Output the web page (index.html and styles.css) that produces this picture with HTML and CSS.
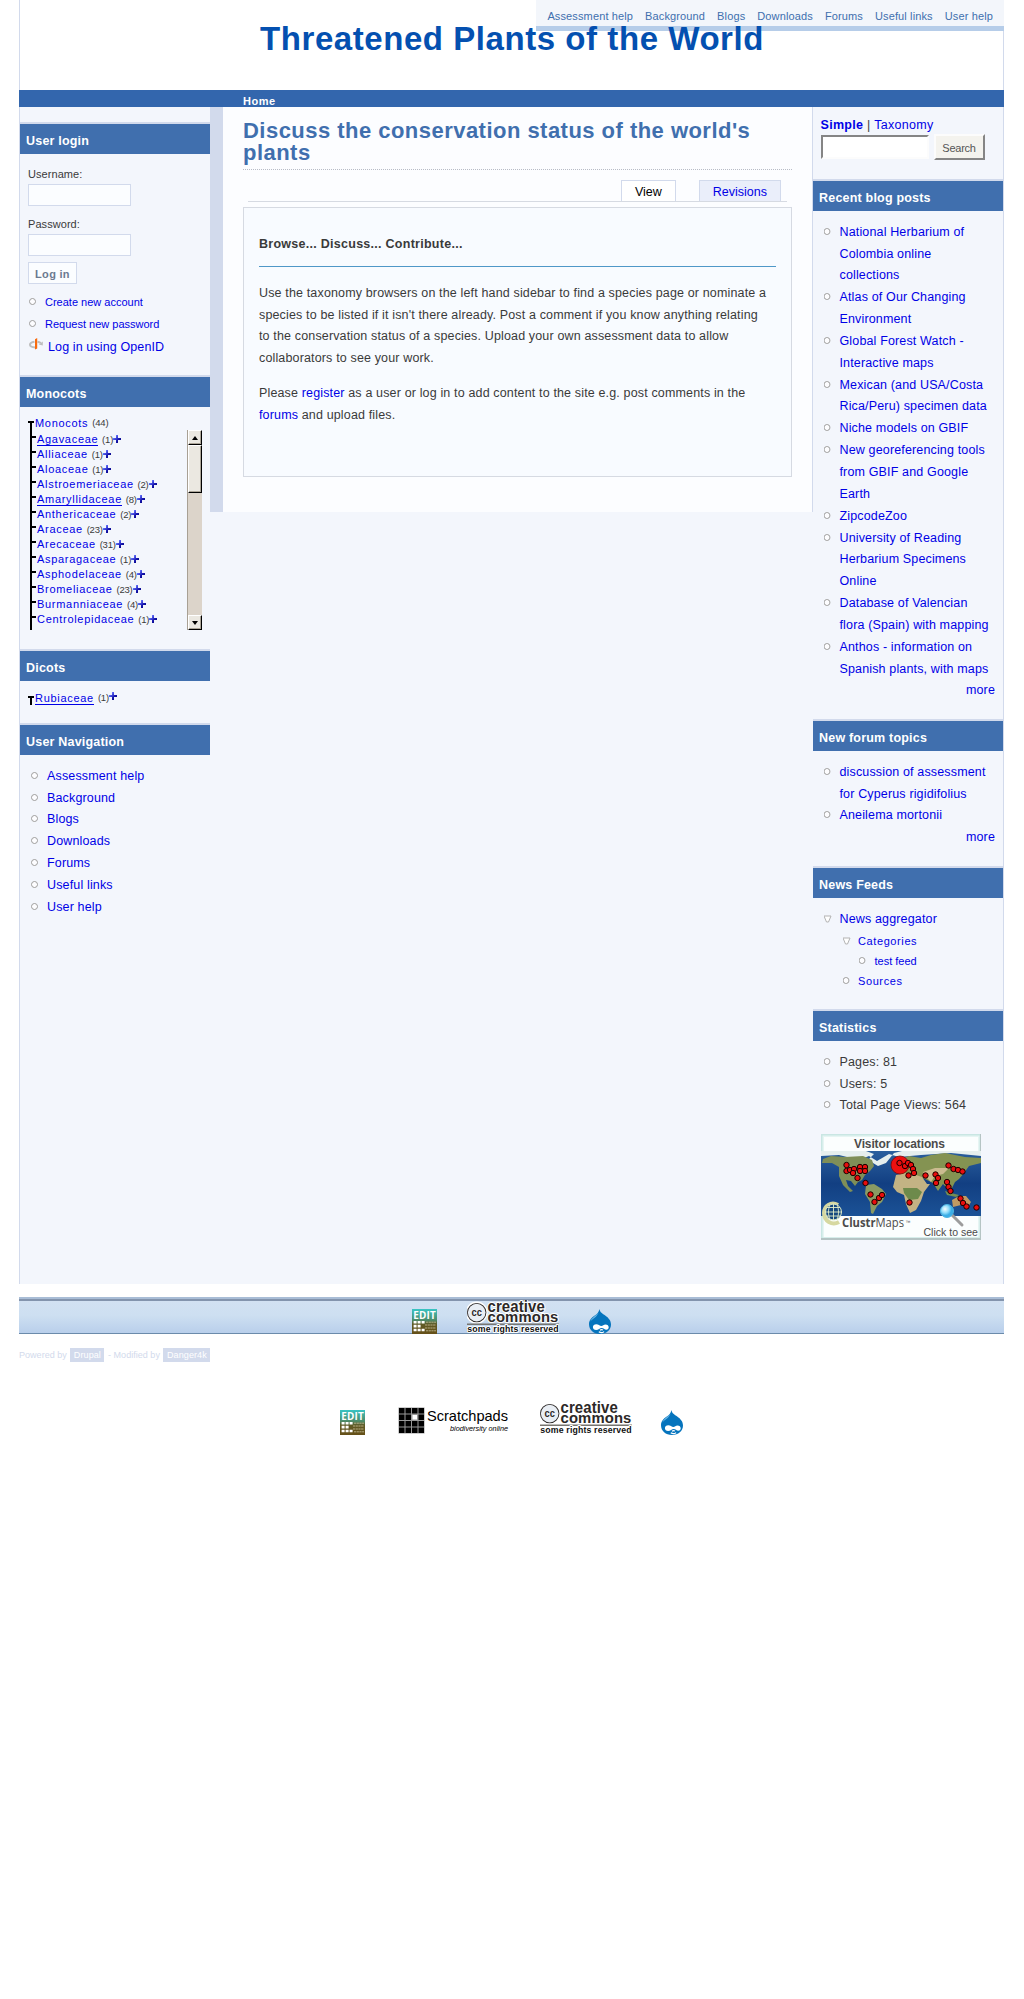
FILE: index.html
```
<!DOCTYPE html>
<html lang="en">
<head>
<meta charset="utf-8">
<title>Threatened Plants of the World</title>
<link rel="stylesheet" href="styles.css">
</head>
<body>
<svg class="defs" width="0" height="0" aria-hidden="true">
  <defs>
    <linearGradient id="editFill" x1="0" y1="0" x2="0" y2="1">
      <stop offset="0" stop-color="#38c4c4"/><stop offset=".45" stop-color="#4d8a68"/><stop offset=".6" stop-color="#5f5a26"/><stop offset="1" stop-color="#665018"/>
    </linearGradient>
    <symbol id="edit" viewBox="0 0 25 25">
      <rect width="25" height="25" fill="url(#editFill)"/>
      <text x="1.3" y="9.8" font-family="Open Sans, sans-serif" font-weight="700" font-size="10.5" textLength="22.5" lengthAdjust="spacingAndGlyphs" fill="#fff">EDIT</text>
      <path fill="#fff" d="M1.6 12h3v2.6h-3zM5.6 12h3v2.6h-3zM9.6 12h3v2.6h-3zM1.6 15.8h3v2.6h-3zM5.6 15.8h3v2.6h-3zM1.6 19.7h3v2.6h-3zM5.6 19.7h3v2.6h-3zM9.6 19.7h3v2.6h-3z"/>
      <path stroke="#b5ac84" stroke-width="1" stroke-dasharray="2.2 .5" d="M14 13.2h10M13 16h11M13 19h11M14 21.8h10"/>
    </symbol>
    <symbol id="cc" viewBox="0 0 92 34">
      <g font-family="Liberation Sans, sans-serif" font-weight="700" fill="#2c2827" stroke="#fff" stroke-width="2" paint-order="stroke" stroke-linejoin="round">
        <circle cx="9.7" cy="12.6" r="9" fill="#e8eef5" stroke="#fff" stroke-width="4"/>
        <circle cx="9.7" cy="12.6" r="8.8" fill="#e9eef4" stroke="#2c2827" stroke-width="1.8"/>
        <text x="4.4" y="16" font-size="10" textLength="10.6" lengthAdjust="spacingAndGlyphs" stroke="none">cc</text>
        <text x="20.5" y="12" font-size="16.5" textLength="57.5" lengthAdjust="spacingAndGlyphs">creative</text>
        <text x="20.5" y="21.8" font-size="15.5" textLength="71" lengthAdjust="spacingAndGlyphs">commons</text>
        <path d="M0 24.2h92" stroke="#77756f" stroke-width="1.6"/>
        <text x="0.3" y="31.6" font-size="8.6" textLength="91.5" lengthAdjust="spacingAndGlyphs" fill="#111">some rights reserved</text>
      </g>
    </symbol>
    <symbol id="drop" viewBox="0 0 22 25">
      <path fill="#0574bd" d="M10.4 0C11 3.6 13.6 4.6 16.2 6.4 19.600 8.800 22 11.500 22 15.500 22 21 17.300 25 11 25S0 21 0 15.300C0 11.500 2.600 8.600 5.400 6.800 8.200 5 9.800 3.400 10.400 0z"/>
      <path fill="#6cb8e6" d="M10.400 1.500C9.800 4.400 7.600 5.700 5.500 7.200 3.500 8.600 2 10.500 1.300 12.500 3.500 9.500 8.600 8.200 10.400 1.500z"/>
      <path fill="#fff" d="M7.300 15.200c2 0 3.400 1.700 5 1.700 1.500 0 2.400-1.500 4.200-1.500 2 0 3.200 1.200 3.200 2.900 0 1.500-.9 2.500-2.400 2.500-1.800 0-2.800-1.700-4.600-1.700-1.900 0-3.200 2-5.600 2-1.900 0-3.200-1.200-3.200-3 0-1.700 1.400-2.900 3.400-2.900z"/>
      <path fill="none" stroke="#fff" stroke-width="1.200" d="M9.800 22.800c1.500 1 4 1 5.300-.2M11 21.200c.8-.7 2.200-.7 2.900 0"/>
    </symbol>
    <linearGradient id="plusFill" x1="0" y1="0" x2="1" y2="1">
      <stop offset=".2" stop-color="#6c79ff"/><stop offset=".6" stop-color="#1515b0"/><stop offset="1" stop-color="#000060"/>
    </linearGradient>
    <symbol id="plus" viewBox="0 0 8 8"><path fill="url(#plusFill)" d="M3 0h2v3h3v2H5v3H3V5H0V3h3z"/></symbol>
  </defs>
</svg>

<div class="page">
  <header class="header">
    <nav class="topmenu">
      <a>Assessment help</a><a>Background</a><a>Blogs</a><a>Downloads</a><a>Forums</a><a>Useful links</a><a>User help</a>
    </nav>
    <h1 class="sitename">Threatened Plants of the World</h1>
  </header>
  <div class="crumbs"><b>Home</b></div>

  <div class="columns">
    <aside class="side left">
      <section class="block login">
        <h2>User login</h2>
        <form class="login-form">
          <label>Username:</label><div class="field"></div>
          <label>Password:</label><div class="field"></div>
          <div class="login-button">Log in</div>
        </form>
        <ul class="login-links">
          <li><a>Create new account</a></li>
          <li><a>Request new password</a></li>
          <li class="openid"><svg width="14" height="13" viewBox="0 0 14 13"><path fill="none" stroke="#bdbdbd" stroke-width="2" d="M5.500 3.800C2.600 4.300 1 5.400 1 6.700c0 1.500 2.200 2.500 5.500 2.700M8.500 3.800c1.400.2 2.400.6 3.300 1.200"/><path fill="#bdbdbd" d="M13.800 3.500v4l-4-1z"/><path fill="#f96a0c" d="M6 1.200 8.200 0v10.500L6 11.600z"/></svg><a>Log in using OpenID</a></li>
        </ul>
      </section>

      <section class="block monocots">
        <h2>Monocots</h2>
        <div class="tree">
          <div class="tree-root"><i class="tee"></i><a>Monocots</a> <small>(44)</small></div>
          <div class="tree-body">
            <ul class="branches">
              <li><a class="open">Agavaceae</a> <small>(1)</small><svg class="plus"><use href="#plus"/></svg></li>
              <li><a>Alliaceae</a> <small>(1)</small><svg class="plus"><use href="#plus"/></svg></li>
              <li><a>Aloaceae</a> <small>(1)</small><svg class="plus"><use href="#plus"/></svg></li>
              <li><a>Alstroemeriaceae</a> <small>(2)</small><svg class="plus"><use href="#plus"/></svg></li>
              <li><a class="open">Amaryllidaceae</a> <small>(8)</small><svg class="plus"><use href="#plus"/></svg></li>
              <li><a>Anthericaceae</a> <small>(2)</small><svg class="plus"><use href="#plus"/></svg></li>
              <li><a>Araceae</a> <small>(23)</small><svg class="plus"><use href="#plus"/></svg></li>
              <li><a>Arecaceae</a> <small>(31)</small><svg class="plus"><use href="#plus"/></svg></li>
              <li><a>Asparagaceae</a> <small>(1)</small><svg class="plus"><use href="#plus"/></svg></li>
              <li><a>Asphodelaceae</a> <small>(4)</small><svg class="plus"><use href="#plus"/></svg></li>
              <li><a>Bromeliaceae</a> <small>(23)</small><svg class="plus"><use href="#plus"/></svg></li>
              <li><a>Burmanniaceae</a> <small>(4)</small><svg class="plus"><use href="#plus"/></svg></li>
              <li><a>Centrolepidaceae</a> <small>(1)</small><svg class="plus"><use href="#plus"/></svg></li>
            </ul>
            <div class="scrollbar">
              <div class="key"><i class="up"></i></div>
              <div class="thumb"></div>
              <div class="track"></div>
              <div class="key"><i class="down"></i></div>
            </div>
          </div>
        </div>
      </section>

      <section class="block dicots">
        <h2>Dicots</h2>
        <div class="tree-root"><i class="tee"></i><a class="open">Rubiaceae</a> <small>(1)</small><svg class="plus"><use href="#plus"/></svg></div>
      </section>

      <section class="block">
        <h2>User Navigation</h2>
        <ul class="list">
          <li><a>Assessment help</a></li><li><a>Background</a></li><li><a>Blogs</a></li><li><a>Downloads</a></li><li><a>Forums</a></li><li><a>Useful links</a></li><li><a>User help</a></li>
        </ul>
      </section>
    </aside>

    <main class="main">
      <h1 class="title">Discuss the conservation status of the world's<br>plants</h1>
      <div class="tabs"><span class="tab active">View</span><span class="tab">Revisions</span></div>
      <article class="node">
        <h3>Browse... Discuss... Contribute...</h3>
        <p>Use the taxonomy browsers on the left hand sidebar to find a species page or nominate a<br>species to be listed if it isn't there already. Post a comment if you know anything relating<br>to the conservation status of a species. Upload your own assessment data to allow<br>collaborators to see your work.</p>
        <p>Please <a>register</a> as a user or log in to add content to the site e.g. post comments in the<br><a>forums</a> and upload files.</p>
      </article>
    </main>

    <aside class="side right">
      <div class="search">
        <div class="search-modes"><a><b>Simple</b></a> | <a>Taxonomy</a></div>
        <div class="search-row"><div class="search-input"></div><div class="search-button">Search</div></div>
      </div>
      <section class="block blogs">
        <h2>Recent blog posts</h2>
        <ul class="list">
          <li><a>National Herbarium of<br>Colombia online<br>collections</a></li>
          <li><a>Atlas of Our Changing<br>Environment</a></li>
          <li><a>Global Forest Watch -<br>Interactive maps</a></li>
          <li><a>Mexican (and USA/Costa<br>Rica/Peru) specimen data</a></li>
          <li><a>Niche models on GBIF</a></li>
          <li><a>New georeferencing tools<br>from GBIF and Google<br>Earth</a></li>
          <li><a>ZipcodeZoo</a></li>
          <li><a>University of Reading<br>Herbarium Specimens<br>Online</a></li>
          <li><a>Database of Valencian<br>flora (Spain) with mapping</a></li>
          <li><a>Anthos - information on<br>Spanish plants, with maps</a></li>
        </ul>
        <div class="more"><a>more</a></div>
      </section>
      <section class="block topics">
        <h2>New forum topics</h2>
        <ul class="list">
          <li><a>discussion of assessment<br>for Cyperus rigidifolius</a></li>
          <li><a>Aneilema mortonii</a></li>
        </ul>
        <div class="more"><a>more</a></div>
      </section>
      <section class="block feeds">
        <h2>News Feeds</h2>
        <ul class="list">
          <li class="expanded"><a>News aggregator</a>
            <ul class="sub">
              <li class="expanded"><a>Categories</a>
                <ul class="subsub"><li><a>test feed</a></li></ul>
              </li>
              <li><a>Sources</a></li>
            </ul>
          </li>
        </ul>
      </section>
      <section class="block">
        <h2>Statistics</h2>
        <ul class="list"><li>Pages: 81</li><li>Users: 5</li><li>Total Page Views: 564</li></ul>
        <svg class="map" width="160" height="106" viewBox="0 0 160 106">
          <defs>
            <linearGradient id="ocean" x1="0" y1="0" x2="0" y2="1"><stop offset="0" stop-color="#2a5f9e"/><stop offset=".5" stop-color="#123f82"/><stop offset="1" stop-color="#1b5296"/></linearGradient>
            <radialGradient id="lens" cx=".35" cy=".35"><stop offset="0" stop-color="#f4fdff"/><stop offset=".6" stop-color="#8fdcfa"/><stop offset="1" stop-color="#3aaee6"/></radialGradient>
            <g id="pin"><circle r="2.700" fill="#e80d0d" stroke="#1a0000"/></g>
          </defs>
          <rect width="160" height="106" fill="#b5c4c4"/>
          <rect width="159" height="104" fill="#c9e6e3"/>
          <rect x="1.500" y="1.500" width="157" height="102" fill="#e6f5f3"/>
          <rect x="3" y="3" width="154" height="100" fill="#fbfefe"/>
          <rect y="17" width="160" height="65" fill="url(#ocean)"/>
          <path fill="#e6efee" d="M0 17h45l8 3-6 6 10 6 8-3 8-10 8-2h79v5l-30-3-30 2-22 2-10-3-12 7-8-5-10 4-20-5L0 22z"/>
          <path fill="#7f8f58" d="M2 25l8-3 14 1 18-1 9 4 2 6-4 5-5 4-3 5-4 2-3 4-4-5-5-1 2 6 5 5-3 1-7-7-4-9 0-9-7-4-10 0z"/>
          <path fill="#8a9a63" d="M45 51l8-1 8 5 4 5-4 8-5 4-4 8-2-1-1-11-5-8z"/>
          <path fill="#849352" d="M76 36l-2-5 6-6 8-3 12 2 10-3 14-2 20 4 16 1v5l-12 3-5 7-5 6-4 3-4 8-4-2-4-4-5 7-5-8-8-4-6-2-8-2-8 1z"/>
          <path fill="#c3b384" d="M75 41l10-2 10 2 6 2 5 7 3 0-6 8-3 9-5 9-6 3-4-9-2-9-7-3-4-5z"/>
          <path fill="#6d8a4b" d="M82 54l14 0 5 4-4 7-9 1-5-7z"/>
          <path fill="#cbbb90" d="M102 38l12-4 14 0-6 6-8 2-4 6-4-4z"/>
          <path fill="#c09a63" d="M131 66l7-4 7 0 5 6-3 5-7-2-8 2z"/>
          <path fill="#758d50" d="M124 57l6 2 8 2-3 2-9-2z"/>
          <circle cx="79" cy="31" r="9" fill="#ec1010" stroke="#7c0909" stroke-width=".8"/>
          <g>
            <use href="#pin" x="25.500" y="31"/><use href="#pin" x="25.500" y="37"/><use href="#pin" x="29" y="36"/><use href="#pin" x="33" y="35"/><use href="#pin" x="32" y="39"/><use href="#pin" x="39" y="33"/><use href="#pin" x="39" y="37"/><use href="#pin" x="44" y="33"/><use href="#pin" x="44" y="37"/><use href="#pin" x="36.500" y="44"/><use href="#pin" x="44.500" y="49"/><use href="#pin" x="49.500" y="60.500"/><use href="#pin" x="53.500" y="68"/><use href="#pin" x="58" y="64"/><use href="#pin" x="61" y="61"/>
            <use href="#pin" x="78.500" y="29"/><use href="#pin" x="84" y="32"/><use href="#pin" x="87" y="29"/><use href="#pin" x="90" y="31"/><use href="#pin" x="92" y="35"/><use href="#pin" x="93" y="39"/><use href="#pin" x="87.500" y="41.500"/><use href="#pin" x="104.500" y="41.500"/><use href="#pin" x="88.500" y="68.500"/><use href="#pin" x="114.500" y="40.500"/><use href="#pin" x="117" y="44"/><use href="#pin" x="115" y="49"/><use href="#pin" x="126" y="48"/><use href="#pin" x="127.500" y="53"/><use href="#pin" x="129.500" y="57"/><use href="#pin" x="127.500" y="31.500"/><use href="#pin" x="132.500" y="35"/><use href="#pin" x="137" y="36"/><use href="#pin" x="141.500" y="37.500"/><use href="#pin" x="139.500" y="64.500"/><use href="#pin" x="142" y="69"/><use href="#pin" x="145.500" y="72.500"/><use href="#pin" x="155.500" y="73.500"/>
          </g>
          <path fill="none" stroke="#d6d8a0" stroke-width="4" d="M17 71C10 67 3 72 3 79c0 8 8 13 15 9"/>
          <circle cx="12.500" cy="78" r="8" fill="#16497e" stroke="#e3eec8"/>
          <path fill="none" stroke="#e3eec8" stroke-width=".9" d="M4.500 78h16M6 73.500h13M6 82h13M12.500 70v16M9 71c-2 4-2 10 0 14M16 71c2 4 2 10 0 14"/>
          <path stroke="#9c9c9c" stroke-width="3" stroke-linecap="round" d="M131 81l10 10"/>
          <circle cx="126" cy="77" r="6.500" fill="url(#lens)" stroke="#4db4e2"/>
          <g font-family="Liberation Sans, sans-serif" fill="#4b4b4b" letter-spacing="0">
            <text x="33" y="13.500" font-size="12" font-weight="700" textLength="91">Visitor locations</text>
            <text x="21" y="93" font-family="Open Sans, sans-serif" font-size="12.500" textLength="62" lengthAdjust="spacingAndGlyphs"><tspan font-weight="700">Clustr</tspan>Maps</text>
            <text x="84.500" y="90" font-size="5">™</text>
            <text x="102.500" y="102" font-size="10.500" textLength="54.500" lengthAdjust="spacingAndGlyphs">Click to see</text>
          </g>
        </svg>
      </section>
    </aside>
  </div>

  <div class="footer">
    <svg width="25" height="25"><use href="#edit"/></svg>
    <svg class="cc" width="92" height="34"><use href="#cc"/></svg>
    <svg width="22" height="25"><use href="#drop"/></svg>
  </div>
  <div class="powered">Powered by <span>Drupal</span> - Modified by <span>Danger4k</span></div>
  <div class="partners">
    <svg width="25" height="25"><use href="#edit"/></svg>
    <svg class="scratch" width="112" height="28" viewBox="0 0 112 28">
      <rect x=".5" y=".5" width="26" height="26" fill="#999"/>
      <path d="M1 1h5.500v5.500H1zM7.500 1H13v5.500H7.500zM14 1h5.500v5.500H14zM20.500 1H26v5.500h-5.500zM1 7.500h5.500V13H1zM7.500 7.500H13V13H7.500zM20.500 7.500H26V13h-5.500zM1 14h5.500v5.500H1zM7.500 14H13v5.500H7.500zM14 14h5.500v5.500H14zM20.500 14H26v5.500h-5.500zM1 20.500h5.500V26H1zM7.500 20.500H13V26H7.500zM14 20.500h5.500V26H14zM20.500 20.500H26V26h-5.500z"/>
      <path fill="#fff" d="M14.500 8H19v4.500h-4.500z"/>
      <text x="29" y="14" font-family="Liberation Sans, sans-serif" font-size="15" letter-spacing="0" textLength="81" lengthAdjust="spacingAndGlyphs">Scratchpads</text>
      <text x="52" y="23.500" font-family="Liberation Sans, sans-serif" font-style="italic" font-size="8" letter-spacing="0" textLength="58" lengthAdjust="spacingAndGlyphs">biodiversity online</text>
    </svg>
    <svg class="cc" width="92" height="34"><use href="#cc"/></svg>
    <svg width="22" height="25"><use href="#drop"/></svg>
  </div>
</div>
</body>
</html>
```
FILE: styles.css
```
* { box-sizing: border-box; }
body {
  margin: 0;
  background: #fff;
  color: #3a3a3a;
  font: 12.5px/21.85px "Liberation Sans", Arial, Helvetica, sans-serif;
  letter-spacing: .15px;
}
h1, h2, h3, p, ul { margin: 0; padding: 0; }
ul { list-style: none; }
a { color: #0000e6; }
.defs { position: absolute; }
.page { width: 985px; margin-left: 19px; }

/* header */
.header {
  height: 90px;
  border: solid #d2daec;
  border-width: 0 1px;
}
.topmenu {
  display: flex;
  justify-content: flex-end;
  gap: 12px;
  width: 468px;
  height: 31px;
  margin: 0 -1px 0 auto;
  padding: 6px 11px 0 0;
  background: #f3f6fb;
  border-bottom: 5px solid #b6cde9;
  font-size: 11px;
  line-height: 20px;
  letter-spacing: .13px;
}
.topmenu a { color: #406fae; }
.sitename {
  position: relative;
  margin-top: -12px;
  padding-left: 1px;
  text-align: center;
  color: #0450b0;
  font-size: 33px;
  line-height: 40px;
  letter-spacing: .56px;
}
.crumbs {
  height: 17px;
  padding: 3px 0 0 224px;
  background: #3366ad;
  color: #fff;
  font-size: 11px;
  line-height: 17px;
  letter-spacing: .5px;
}

/* columns */
.columns {
  display: flex;
  align-items: flex-start;
  height: 1177px;
  background: #f3f6fc;
  border: solid #d2daec;
  border-width: 0 1px;
}
.side { width: 190px; }
.left { padding-top: 15px; }
.block h2 {
  height: 32px;
  padding: 3px 0 0 6px;
  background: #406fae;
  border-top: 2px solid #d2daec;
  color: #fff;
  font-size: 12.5px;
  line-height: 29px;
  letter-spacing: .2px;
}
.login { height: 253px; }
.monocots { height: 274px; }
.dicots { height: 74px; }
.blogs { height: 540px; }
.topics { height: 147px; }
.feeds { height: 143px; }

/* login */
.login-form { padding: 10px 8px 0; }
.login-form label {
  display: block;
  height: 20px;
  font-size: 11px;
  line-height: 20px;
  letter-spacing: .06px;
}
.field {
  width: 103px;
  height: 22px;
  margin-bottom: 8px;
  background: #fbfdff;
  border: 1px solid #d2daec;
}
.login-button {
  width: 49px;
  height: 22px;
  margin-top: -2px;
  background: #fbfdff;
  border: 1px solid #d2daec;
  color: #6c7a90;
  font-size: 11px;
  font-weight: 700;
  line-height: 22px;
  letter-spacing: .3px;
  text-align: center;
}
.login-links { padding: 7px 8px 0; }
.login-links li {
  height: 22px;
  padding-left: 17px;
  font-size: 11px;
  line-height: 22px;
  letter-spacing: 0;
}
.login-links .openid {
  display: flex;
  align-items: center;
  gap: 5px;
  padding-left: 1px;
  font-size: 12.5px;
  letter-spacing: .12px;
}
.login-links .openid a { padding-top: 1px; }
.openid svg { margin-top: -3px; }

/* ring and triangle bullets */
.list li, .login-links li { background: radial-gradient(circle at 3.5px 3.5px, #fdfdff 2px, #b3b3b3 2.6px, #b3b3b3 3.1px, transparent 3.8px) 1px 7px / 8px 8px no-repeat; }
.login-links .openid { background: none; }
.list { padding: 10.7px 8px 0 11px; }
.list li {
  padding-left: 16px;
  background-position: 0 6px;
}
.right .list li { padding-left: 15.5px; background-position: -.5px 6px; }
.list .expanded, .right .list .expanded { background: url("data:image/svg+xml,%3Csvg xmlns='http://www.w3.org/2000/svg' width='9' height='8'%3E%3Cpath d='M1 1h7L5.500 7h-2z' fill='%23fff' stroke='%23b3b3b3'/%3E%3C/svg%3E") -1px 6px no-repeat; }
.sub { font-size: 11px; line-height: 20px; letter-spacing: .6px; }
.list .sub li { margin-left: 3px; }
.list .subsub li { margin-left: 1px; letter-spacing: 0; }
.more { padding-right: 8px; text-align: right; }

/* taxonomy tree */
.tree-root, .branches {
  font-size: 11px;
  line-height: 15px;
  letter-spacing: .7px;
  white-space: nowrap;
}
.tree-root small, .branches small { font-size: 9.500px; letter-spacing: -.2px; }
.open { border-bottom: 1px solid #0000e6; }
.plus { width: 8px; height: 8px; }
.tree { padding: 9px 8px 0; }
.tree-root { display: flex; gap: 4px; height: 14px; line-height: 14px; }
.tree-root .plus { margin: 1px 0 0 -4px; }
.tee {
  width: 6px;
  height: 9px;
  margin: 5px -3px 0 0;
  background: linear-gradient(#000, #000) 0 0 / 6px 2px no-repeat, linear-gradient(#000, #000) 2px 0 / 2px 9px no-repeat;
}
.dicots .tree-root { padding-left: 8px; margin-top: 10px; }
.tree-body {
  display: flex;
  justify-content: space-between;
  height: 200px;
  overflow: hidden;
}
.branches {
  margin-left: 2px;
  height: 200px;
  padding-top: 2px;
  background: linear-gradient(#000, #000) 0 0 / 2px 200px no-repeat;
}
.branches li {
  height: 15px;
  padding-left: 7px;
  background: linear-gradient(#000, #000) 0 4px / 6px 2px no-repeat;
}
.branches a { line-height: 11px; }
.scrollbar {
  display: flex;
  flex-direction: column;
  width: 15px;
  background: #dcd4ca;
  border-left: 1px solid #a8a094;
}
.key, .thumb {
  background: #ebe8e1;
  border: 1px solid #fff;
  border-right-color: #000;
  border-bottom-color: #000;
  box-shadow: inset -1px -1px #aca598;
}
.key { display: flex; align-items: center; justify-content: center; height: 15px; }
.thumb { height: 48px; }
.track { flex: 1; }
.up, .down { border: 3px solid transparent; }
.up { border-top: 0; border-bottom: 4px solid #000; }
.down { border-bottom: 0; border-top: 4px solid #000; }

/* centre */
.main {
  width: 603px;
  height: 405px;
  padding: 12px 20px 0;
  background: #fcfdff;
  border-left: 13px solid #d2daec;
  border-right: 1px solid #d2daec;
}
.title {
  height: 51px;
  padding-top: 1px;
  border-bottom: 1px dotted #b8bcc6;
  color: #406fae;
  font-size: 22px;
  line-height: 22px;
  letter-spacing: .47px;
}
.tabs {
  display: flex;
  justify-content: flex-end;
  gap: 23px;
  height: 32px;
  margin: 0 5px;
  padding: 10px 6px 0 0;
  border-bottom: 1px solid #d6dae2;
}
.tab {
  padding: 2px 13px 0;
  background: #eaeefa;
  border: 1px solid #d2daec;
  border-bottom: 0;
  color: #0000e6;
  line-height: 19px;
  letter-spacing: 0;
}
.tab.active { background: #fff; color: #000; }
.node {
  height: 270px;
  margin-top: 5px;
  padding: 25px 15px 0;
  background: #f8fbff;
  border: 1px solid #d6dae2;
}
.node h3 {
  height: 34px;
  border-bottom: 1px solid #4f98c8;
  font-size: 12.5px;
  line-height: 22px;
  letter-spacing: .27px;
}
.node p { margin-top: 15.7px; white-space: nowrap; }
.node p + p { margin-top: 13px; }

/* search */
.search { height: 72px; padding: 8px 7.5px 0; }
.search-modes { height: 20px; letter-spacing: .3px; }
.search-row { display: flex; gap: 5px; font-size: 11px; }
.search-input {
  width: 108px;
  height: 24px;
  background: #fff;
  border: 2px solid #fcfcfc;
  border-top-color: #858585;
  border-left-color: #858585;
}
.search-button {
  width: 51px;
  height: 26px;
  margin-top: -1px;
  background: #f4f3ee;
  border: 2px solid #fcfcfc;
  border-right-color: #858585;
  border-bottom-color: #858585;
  color: #555;
  line-height: 24px;
  letter-spacing: -.25px;
  text-align: center;
}
.map { display: block; margin: 17px 0 0 8px; }

/* footer */
.footer {
  display: flex;
  align-items: flex-end;
  height: 37px;
  margin-top: 13px;
  padding-left: 393px;
  background: linear-gradient(#a9bdd6 0 2px, #8394ad 2px 4px, #d2e1f2 4px, #cddff1 50%, #b9cfeb 36px, #6b8bab 36px);
}
.footer svg + svg { margin-left: 30px; }
.powered {
  height: 71px;
  padding-top: 11px;
  color: #d2daec;
  font-size: 9px;
  line-height: 20px;
  letter-spacing: .03px;
}
.powered span {
  display: inline-block;
  margin: 0 1px;
  padding: 0 3.5px;
  background: #d2daec;
  color: #fff;
  line-height: 14px;
  letter-spacing: .1px;
}
.partners { display: flex; align-items: flex-end; height: 30px; padding-left: 321px; }
.scratch { margin: 0 30px 0 33px; }
.partners svg:last-child { margin-left: 29px; }
```
